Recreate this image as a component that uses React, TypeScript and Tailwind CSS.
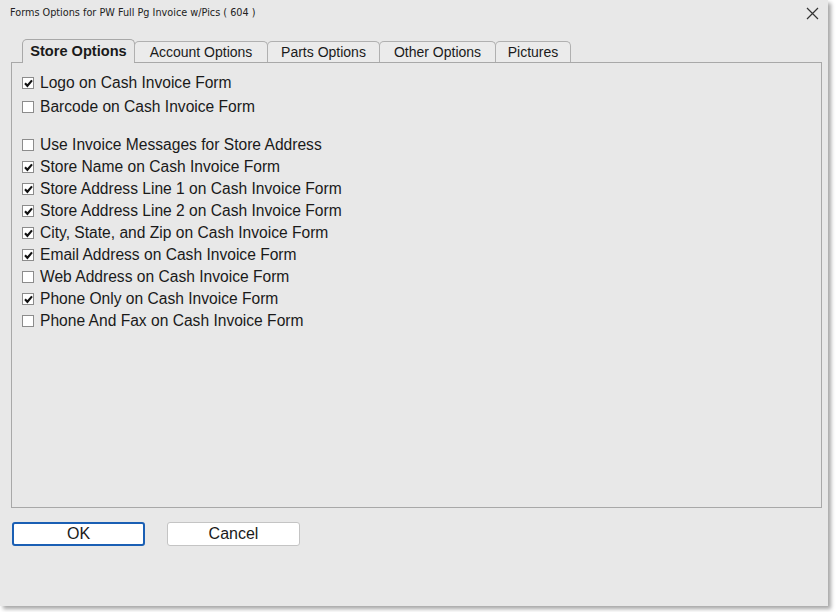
import { useState } from "react";

const groupA = [
  { label: "Logo on Cash Invoice Form", checked: true },
  { label: "Barcode on Cash Invoice Form", checked: false },
];

const groupB = [
  { label: "Use Invoice Messages for Store Address", checked: false },
  { label: "Store Name on Cash Invoice Form", checked: true },
  { label: "Store Address Line 1 on Cash Invoice Form", checked: true },
  { label: "Store Address Line 2 on Cash Invoice Form", checked: true },
  { label: "City, State, and Zip on Cash Invoice Form", checked: true },
  { label: "Email Address on Cash Invoice Form", checked: true },
  { label: "Web Address on Cash Invoice Form", checked: false },
  { label: "Phone Only on Cash Invoice Form", checked: true },
  { label: "Phone And Fax on Cash Invoice Form", checked: false },
];

const tabs = [
  { label: "Store Options", w: "w-[113px]" },
  { label: "Account Options", w: "w-[134px]" },
  { label: "Parts Options", w: "w-[113px]" },
  { label: "Other Options", w: "w-[117px]" },
  { label: "Pictures", w: "w-[76px]" },
];

function Check({ label, checked, h }: { label: string; checked: boolean; h: string }) {
  const [on, setOn] = useState(checked);
  return (
    <label className={`flex items-center ${h} cursor-default`} onClick={() => setOn(!on)}>
      <span className="w-[12px] h-[12px] border border-[#8c8c8c] bg-white flex items-center justify-center shrink-0">
        {on && (
          <svg width="9" height="9" viewBox="0 0 9 9">
            <path d="M1 4.2 L3.4 6.8 L8 1.4" fill="none" stroke="#111" strokeWidth="2.1" />
          </svg>
        )}
      </span>
      <span className="ml-[6px] text-[15.6px] text-[#1a1a1a] leading-none">{label}</span>
    </label>
  );
}

export default function App() {
  const [active, setActive] = useState(0);

  return (
    <div className="w-[837px] h-[612px] bg-white" style={{ fontFamily: '"Liberation Sans", Arial, sans-serif' }}>
      <div className="w-[828px] h-[606px] bg-[#e8e8e8] shadow-[3px_3px_4px_rgba(0,0,0,0.35)] flex flex-col">
        {/* title bar */}
        <div className="h-[26px] flex items-center justify-between pl-[10px] pr-[9px]">
          <span className="text-[9.7px] text-[#222]" style={{ fontFamily: '"DejaVu Sans", sans-serif' }}>
            Forms Options for PW Full Pg Invoice w/Pics ( 604 )
          </span>
          <svg width="13" height="13" viewBox="0 0 13 13">
            <path d="M1 1 L12 12 M12 1 L1 12" stroke="#333" strokeWidth="1.2" />
          </svg>
        </div>

        {/* tabs */}
        <div className="mt-[14px] ml-[11px] w-[811px] flex items-end h-[23px] pl-[11px] border-b border-[#a8a8a8] relative z-10">
          {tabs.map((t, i) =>
            i === active ? (
              <button
                key={t.label}
                onClick={() => setActive(i)}
                className={`${t.w} h-[24px] -mb-px bg-[#e8e8e8] border border-[#a8a8a8] border-b-0 rounded-t-[5px] text-[14.6px] font-bold text-[#1a1a1a] flex items-center justify-center`}
              >
                {t.label}
              </button>
            ) : (
              <button
                key={t.label}
                onClick={() => setActive(i)}
                className={`${t.w} h-[21px] bg-[#ebebeb] border border-[#b0b0b0] border-b-0 rounded-t-[5px] text-[14px] text-[#1a1a1a] flex items-center justify-center -ml-px first:ml-0`}
              >
                {t.label}
              </button>
            )
          )}
        </div>

        {/* panel */}
        <div className="ml-[11px] w-[811px] h-[445px] border border-t-0 border-[#a8a8a8] pl-[10px] pt-[8px]">
          {groupA.map((c) => (
            <Check key={c.label} {...c} h="h-[24px]" />
          ))}
          <div className="h-[15px]" />
          {groupB.map((c) => (
            <Check key={c.label} {...c} h="h-[22px]" />
          ))}
        </div>

        {/* buttons */}
        <div className="mt-[14px] ml-[12px] flex gap-[22px]">
          <button className="w-[133px] h-[24px] bg-white border-2 border-[#1a5fb4] rounded-[3px] text-[16px] text-[#1a1a1a] leading-none">
            OK
          </button>
          <button className="w-[133px] h-[24px] bg-white border border-[#c4c4c4] rounded-[3px] text-[16px] text-[#1a1a1a] leading-none">
            Cancel
          </button>
        </div>
      </div>
    </div>
  );
}
